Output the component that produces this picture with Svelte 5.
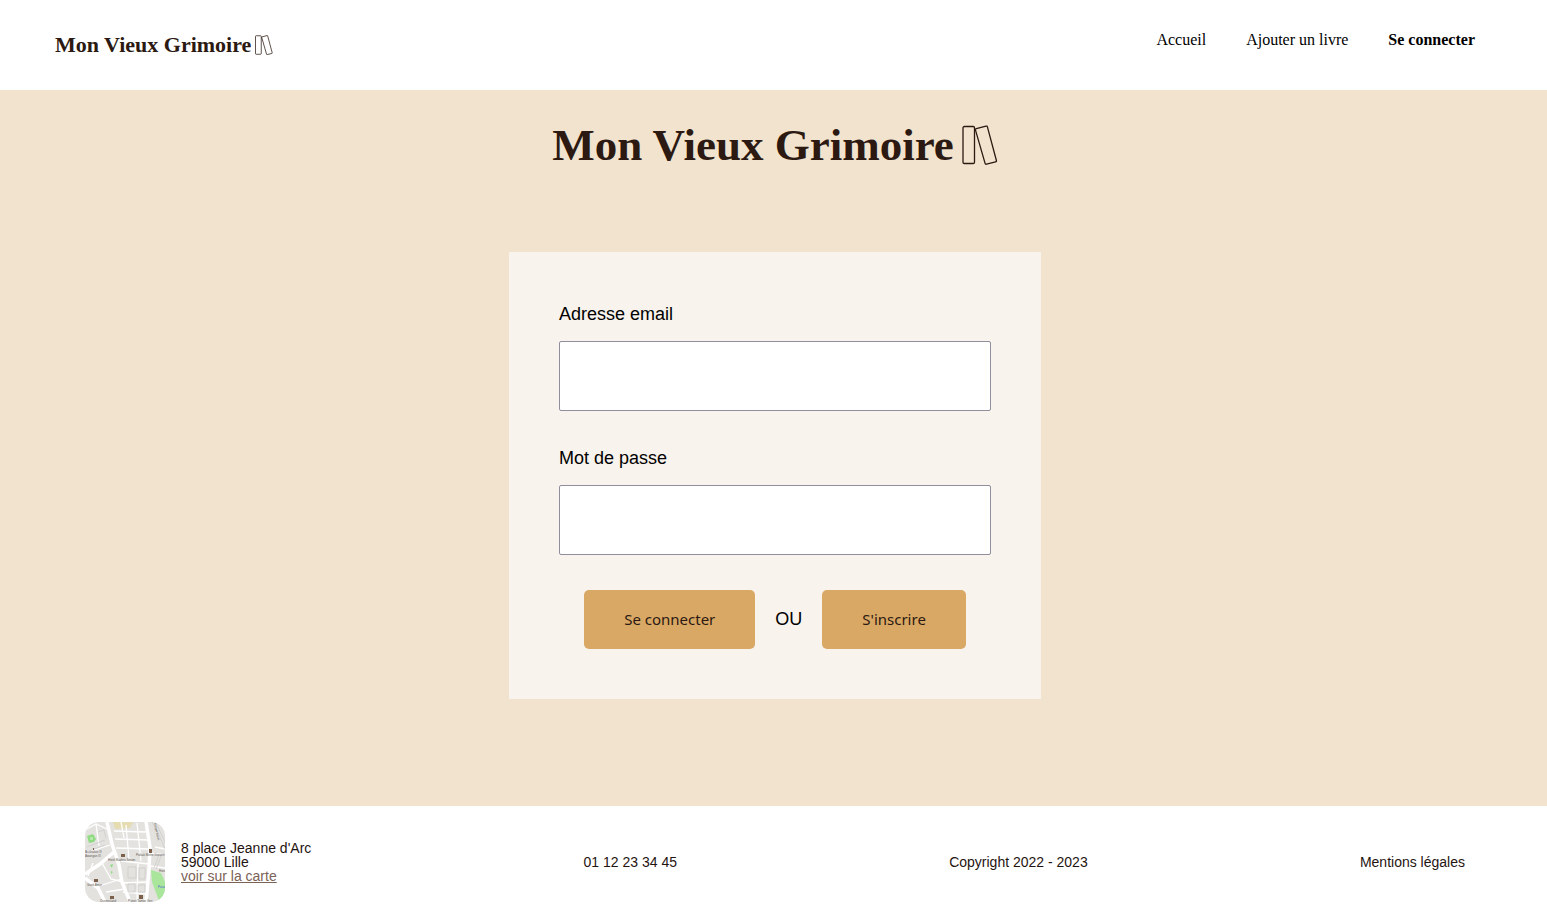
<script>
  let email = $state('');
  let password = $state('');
</script>

{#snippet logo(large)}
  <span class="logo" class:large>
    <span>Mon Vieux Grimoire</span>
    <svg viewBox="0 0 36 40" fill="none" stroke="currentColor" aria-hidden="true">
      <rect x="1" y="1.5" width="11.5" height="37" rx="1.3" />
      <path d="M14.3 3.7 24 1.1Q25.100 .8 25.400 1.900L34.400 35.500Q34.700 36.600 33.600 36.900L24.500 39.200Q23.400 39.500 23.100 38.400L13.500 5.100Q13.200 4 14.300 3.700Z" />
    </svg>
  </span>
{/snippet}

<div class="page">
  <header>
    <a class="home" href="#accueil">{@render logo(false)}</a>
    <nav>
      <a href="#accueil">Accueil</a>
      <a href="#ajouter">Ajouter un livre</a>
      <a class="active" href="#connexion">Se connecter</a>
    </nav>
  </header>

  <main>
    <h1>{@render logo(true)}</h1>
    <form onsubmit={(e) => e.preventDefault()}>
      <label for="email">Adresse email</label>
      <input id="email" type="text" bind:value={email} />
      <label for="password">Mot de passe</label>
      <input id="password" type="password" bind:value={password} />
      <div class="actions">
        <button type="submit">Se connecter</button>
        <span>OU</span>
        <button type="button">S'inscrire</button>
      </div>
    </form>
  </main>

  <footer>
    <div class="place">
      <svg class="map" viewBox="0 0 80 80" aria-hidden="true">
        <rect width="80" height="80" fill="#e3e2df" />
        <path d="M28 0H48L45 6 30 7Z" fill="#e6dcb2" />
        <path d="M2 14 8 12 11 17 9 20 4 21Z" fill="#8fdc83" />
        <path d="M5 15 8 15 8 18 5 18Z" fill="#b5e8aa" />
        <path d="M66 48 76 51 80 60V77L74 79 67 60Z" fill="#a9e59b" />
        <path d="M25 43 28 42 27 46ZM26 49 28 50 26 52Z" fill="#8fdc83" />
        <g fill="none" stroke="#fff">
          <path stroke-width="3.5" d="M22 0 27 22 34 43 37 60 45 80M61 0 65 25 64 48 61 80M0 52 15 42 29 30M0 56 13 66 20 80" />
          <path stroke-width="1.3" d="M0 8 11 2 22 7M11 2 14 24M0 31 25 23M29 9 62 10M30 17 64 18M31 26 64 27M36 39 64 42M41 3 44 37M52 1 56 39M36 0 39 16M37 61 62 60M38 70 62 72M53 42 52 80M64 31 80 33M65 44 80 46M17 41 26 57 38 60M14 64 36 57M21 70 40 67M3 54 8 41M70 25 80 27" />
        </g>
        <g fill="none" stroke="#c9c9c7" stroke-width=".7">
          <path d="M67 0Q76 16 80 27M70 0Q77 13 80 20M77 32 71 47M74 32 69 46M2 25 20 18M4 29 20 23M13 10 19 8 21 16" />
          <path d="M43 45H51V56H43ZM54 46H60V57H54ZM43 62H50V70H43ZM53 63H60V70H53Z" />
        </g>
        <g fill="#7c604c">
          <path d="M36 32h4v3h-4ZM64 27h3v4h-3ZM9 57h4v3h-4ZM25 74h4v3h-4ZM54 73h4v4h-4ZM8 26h1v2h-1Z" />
        </g>
        <g class="names">
          <text x="0" y="31">Australian III</text>
          <text x="0" y="35">Awangan III</text>
          <text x="23" y="39">Hotel Madina Seram</text>
          <text x="51" y="34">Palsak Metro Geranin</text>
          <text x="2" y="64">Gaok Amur</text>
          <text x="43" y="80">Planet Taman Veri</text>
          <text x="15" y="80">Queensland</text>
          <text x="74" y="50">Hotel</text>
          <text x="73" y="66" class="blue">Pasar</text>
          <text transform="translate(69 1) rotate(78)">Sungai Basel</text>
        </g>
      </svg>
      <address>
        8 place Jeanne d'Arc<br />59000 Lille<br /><a href="#carte">voir sur la carte</a>
      </address>
    </div>
    <p>01 12 23 34 45</p>
    <p>Copyright 2022 - 2023</p>
    <p>Mentions légales</p>
  </footer>
</div>

<style>
  :global(body) { margin: 0; background: #fff; }
  .page {
    min-height: 100vh;
    display: flex;
    flex-direction: column;
    font-family: "Liberation Sans", Arial, sans-serif;
    font-size: 18px;
    color: #000;
  }
  header {
    display: flex;
    justify-content: space-between;
    align-items: center;
    height: 90px;
    padding: 0 72px 0 55px;
  }
  a { color: inherit; text-decoration: none; }
  .logo {
    display: flex;
    align-items: center;
    gap: 4px;
    color: #2b1912;
    font: bold 22px/24px "Liberation Serif", "Times New Roman", serif;
    white-space: nowrap;
  }
  .logo svg { height: 20px; width: 18px; stroke-width: 1.5; }
  .logo.large { gap: 8px; font-size: 45px; line-height: 40px; }
  .logo.large svg { height: 40px; width: 36px; stroke-width: 1.3; }
  nav {
    display: flex;
    gap: 40px;
    padding-bottom: 10px;
    font: 16px/18px "Liberation Serif", "Times New Roman", serif;
  }
  .active { font-weight: bold; }
  main {
    flex: 1;
    display: flex;
    flex-direction: column;
    align-items: center;
    padding: 35px 0 107px 3px;
    background: #f2e3ce;
  }
  h1 { margin: 0 0 87px; }
  form {
    box-sizing: border-box;
    width: 532px;
    max-width: 100%;
    display: flex;
    flex-direction: column;
    padding: 50px;
    background: #f8f3ec;
  }
  label { line-height: 24px; margin-bottom: 15px; }
  input {
    box-sizing: border-box;
    width: 100%;
    height: 70px;
    margin: 0 0 35px;
    padding: 0 16px;
    border: 1px solid #8f8f9d;
    border-radius: 2px;
    background: #fff;
    font: inherit;
  }
  .actions {
    display: flex;
    justify-content: center;
    align-items: center;
    gap: 20px;
  }
  button {
    padding: 0 40px;
    border: 0;
    border-radius: 5px;
    background: #d9a864;
    color: #2b1912;
    font: 15px/59px "Noto Sans", Tahoma, sans-serif;
    white-space: nowrap;
  }
  footer {
    display: flex;
    justify-content: space-between;
    align-items: center;
    padding: 16px 82px 12px 85px;
    font-size: 14px;
    line-height: 14px;
    color: #1f1410;
  }
  footer p { margin: 0; }
  .place { display: flex; align-items: center; gap: 16px; }
  .map { width: 80px; height: 80px; border-radius: 14px; }
  .names { font-size: 3px; fill: #5f5752; }
  .blue { fill: #4a68d8; }
  address { font-style: normal; }
  address a { color: #7b6256; text-decoration: underline; }
</style>
